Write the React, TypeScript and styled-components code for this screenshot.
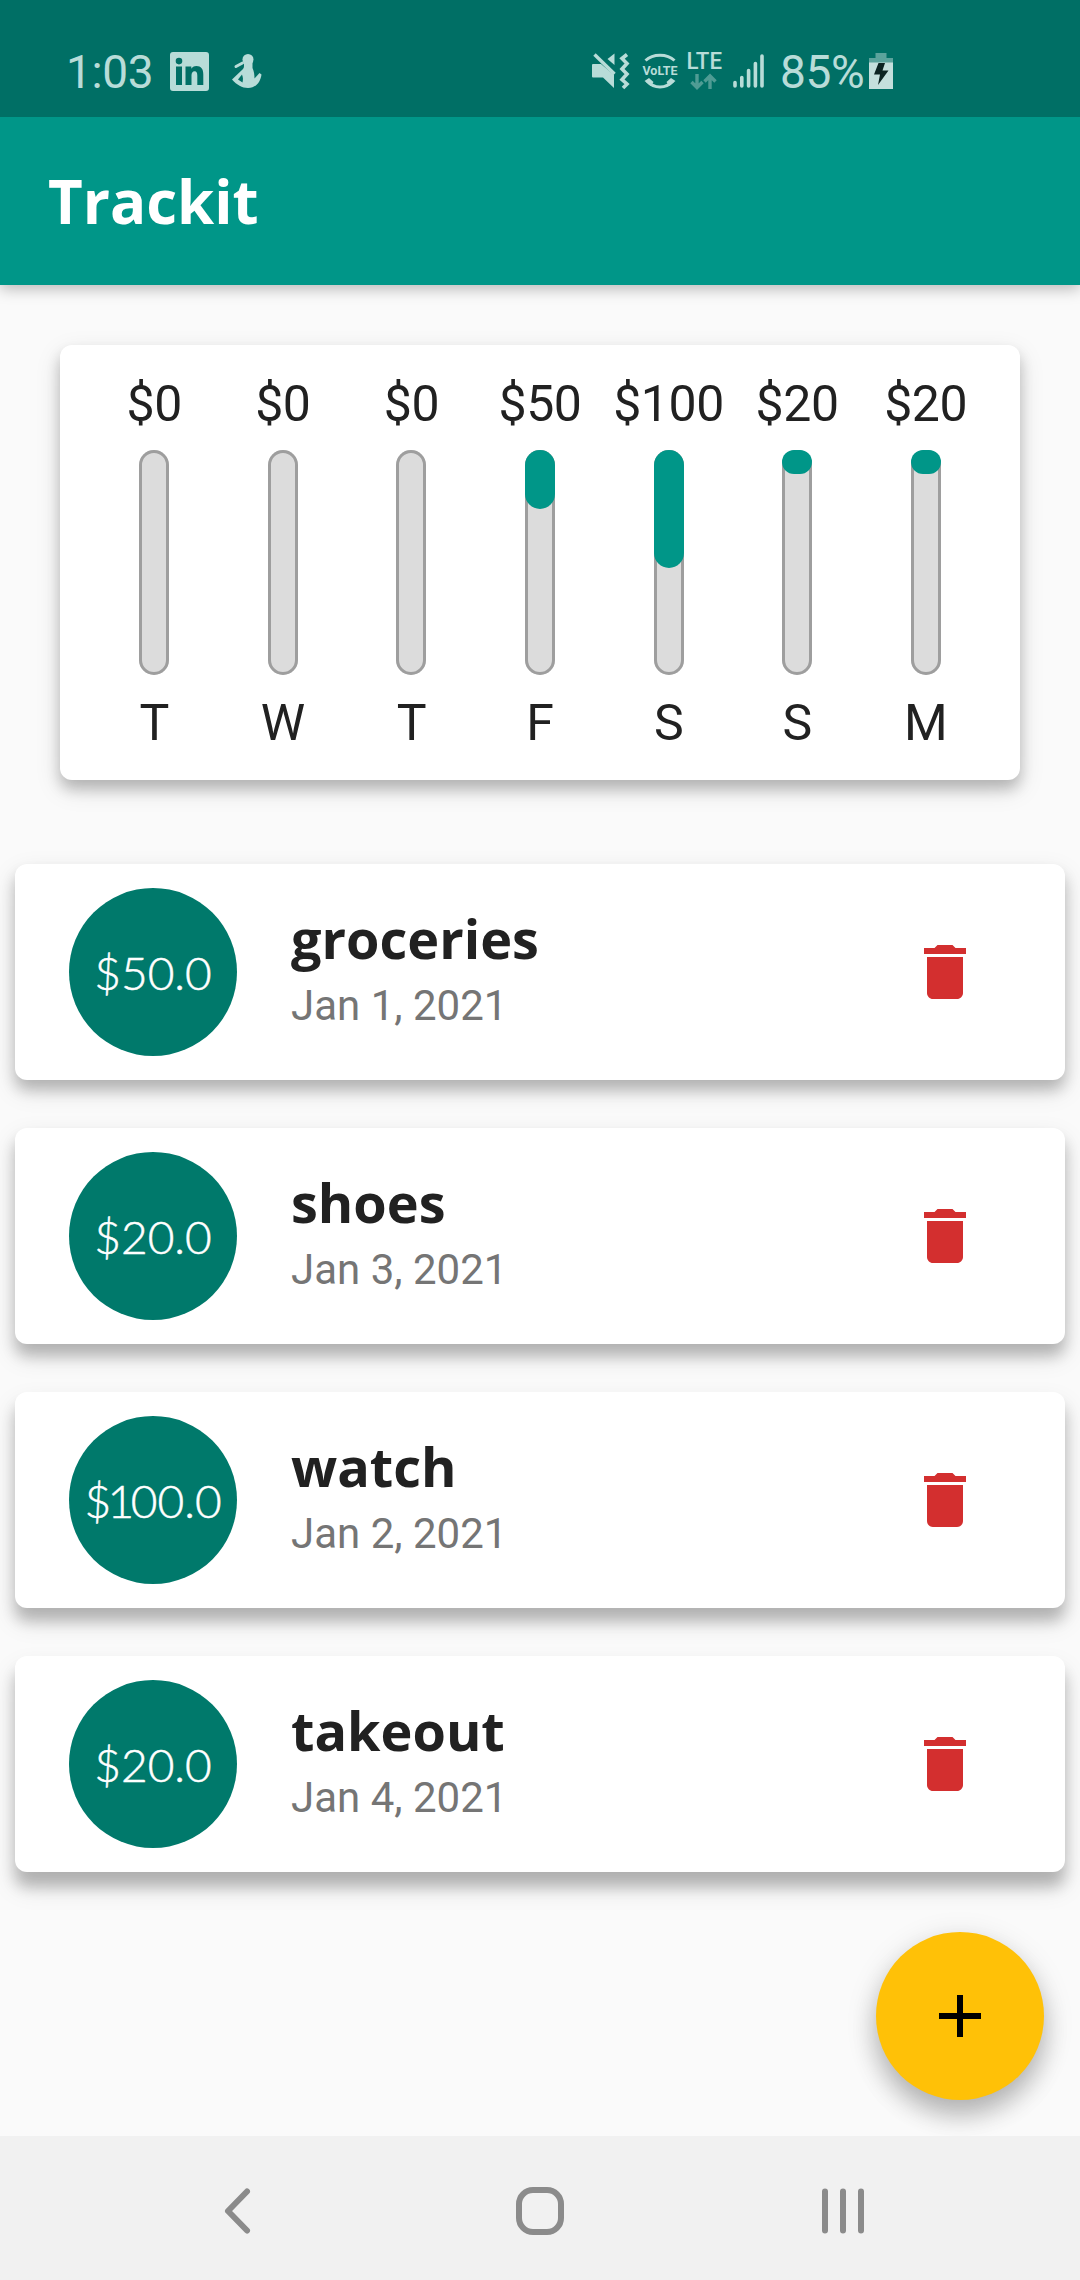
import React from 'react';
import styled, { createGlobalStyle } from 'styled-components';

const GlobalStyle = createGlobalStyle`
  * { box-sizing: border-box; }
  body { margin: 0; background: #fafafa; font-family: Roboto, "Noto Sans", sans-serif; }
`;

const tint = '#b8dcd8';

const Screen = styled.div`
  width: 1080px;
  height: 2280px;
  display: flex;
  flex-direction: column;
  background: #fafafa;
  overflow: hidden;
`;

const StatusBar = styled.header`
  height: 117px;
  flex: none;
  position: relative;
  z-index: 1;
  display: flex;
  justify-content: space-between;
  padding: 48px 187px 0 66px;
  background: #006f65;
  color: ${tint};
`;

const StatusGroup = styled.div`
  display: flex;
  height: 46px;
  align-items: center;
`;

const StatusText = styled.span<{ $width: number; $gap?: number }>`
  width: ${(p) => p.$width}px;
  margin-left: ${(p) => p.$gap ?? 0}px;
  padding-top: 2px;
  font-size: 46px;
  line-height: 46px;
  letter-spacing: -0.4px;
  white-space: nowrap;
`;

const StatusIcon = styled.svg<{ $gap?: number }>`
  display: block;
  flex: none;
  margin-left: ${(p) => p.$gap ?? 0}px;
  overflow: visible;
`;

const AppBar = styled.div`
  height: 168px;
  flex: none;
  display: flex;
  align-items: center;
  padding-left: 48px;
  background: #009688;
  box-shadow: 0 4px 14px rgba(0, 0, 0, 0.26);
`;

const AppTitle = styled.h1`
  margin: 0;
  color: #fff;
  font: 700 60px/82px "Open Sans", sans-serif;
`;

const Body = styled.main`
  flex: 1;
  min-height: 0;
  position: relative;
  padding: 60px 15px 0;
`;

const Card = styled.section<{ $drop?: number }>`
  background: #fff;
  border-radius: 12px;
  box-shadow:
    0 ${(p) => p.$drop ?? 9}px 14px rgba(0, 0, 0, 0.2),
    0 ${(p) => p.$drop ?? 9}px 26px rgba(0, 0, 0, 0.13);
`;

const ChartCard = styled(Card)`
  display: grid;
  grid-template-columns: repeat(7, 1fr);
  height: 435px;
  margin: 0 45px 84px;
  padding: 29px 30px 0;
`;

const DayColumn = styled.div`
  display: flex;
  flex-direction: column;
  align-items: center;
  color: #212121;
  font-size: 50px;
  line-height: 60px;
  letter-spacing: -0.4px;
`;

const Track = styled.div`
  width: 30px;
  height: 225px;
  margin: 16px 0 18px;
  border-radius: 15px;
  background: #dcdcdc;
  box-shadow: inset 0 0 0 3px #9e9e9e;
`;

const Fill = styled.div`
  border-radius: 15px;
  background: #009688;
`;

const ExpenseList = styled.ul`
  list-style: none;
  margin: 0;
  padding: 0;
  display: flex;
  flex-direction: column;
  gap: 48px;
`;

const ExpenseRow = styled(Card).attrs({ as: 'li' })`
  height: 216px;
  display: flex;
  align-items: center;
  padding: 0 84px 0 54px;
`;

const Amount = styled.div`
  width: 168px;
  height: 168px;
  flex: none;
  display: flex;
  align-items: center;
  justify-content: center;
  padding-top: 2px;
  border-radius: 50%;
  background: #00796b;
  color: #fff;
  font: 300 46px/56px Lato, sans-serif;
  -webkit-text-stroke: 0.5px #fff;
`;

const Leading = styled.span<{ $narrow: boolean }>`
  letter-spacing: ${(p) => (p.$narrow ? -3.5 : 0)}px;
`;

const Details = styled.div`
  flex: 1;
  padding-left: 54px;
`;

const ExpenseName = styled.h2`
  margin: 0 0 4px;
  color: #212121;
  font: 700 54px/72px "Open Sans", sans-serif;
`;

const ExpenseDate = styled.p`
  margin: 0 0 8px;
  color: #757575;
  font-size: 42px;
  line-height: 56px;
`;

const DeleteButton = styled.button`
  width: 72px;
  height: 72px;
  padding: 0;
  border: 0;
  background: none;
  color: #d32f2f;
`;

const AddButton = styled.button`
  position: absolute;
  right: 36px;
  bottom: 36px;
  width: 168px;
  height: 168px;
  display: flex;
  align-items: center;
  justify-content: center;
  padding: 0;
  border: 0;
  border-radius: 50%;
  background: #ffc107;
  color: #000;
  box-shadow: 0 16px 24px rgba(0, 0, 0, 0.2), 0 8px 32px rgba(0, 0, 0, 0.14);
`;

const NavBar = styled.nav`
  height: 144px;
  flex: none;
  position: relative;
  display: flex;
  justify-content: space-between;
  align-items: center;
  padding: 6px 213px 0;
  background: #f1f1f1;
`;

const week = [
  { day: 'T', spent: 0 },
  { day: 'W', spent: 0 },
  { day: 'T', spent: 0 },
  { day: 'F', spent: 50 },
  { day: 'S', spent: 100 },
  { day: 'S', spent: 20 },
  { day: 'M', spent: 20 },
];
const total = week.reduce((sum, d) => sum + d.spent, 0);

const expenses = [
  { name: 'groceries', date: 'Jan 1, 2021', amount: 50 },
  { name: 'shoes', date: 'Jan 3, 2021', amount: 20 },
  { name: 'watch', date: 'Jan 2, 2021', amount: 100 },
  { name: 'takeout', date: 'Jan 4, 2021', amount: 20 },
];

const LinkedInIcon = () => (
  <StatusIcon $gap={22} width="39" height="39" viewBox="0 0 39 39">
    <path
      fill={tint}
      fillRule="evenodd"
      d="M3 0H36a3 3 0 0 1 3 3V36a3 3 0 0 1-3 3H3a3 3 0 0 1-3-3V3A3 3 0 0 1 3 0ZM6 14.5V33h6V14.5ZM9 5.800a3.300 3.300 0 1 0 0 6.600a3.300 3.300 0 0 0 0-6.600ZM15.500 14.500V33h6V23.500c0-2.500 1-4.200 3.100-4.200s2.700 1.800 2.700 4.200V33h6V22.500c0-5.600-2.300-8.500-6.800-8.500-2.600 0-4.300 1.300-5.200 2.800V14.500Z"
    />
  </StatusIcon>
);

const FigureIcon = () => (
  <StatusIcon $gap={23} width="30" height="34" viewBox="0 0 30 34" fill="none" stroke={tint}>
    <circle cx="16" cy="5.500" r="5.500" fill={tint} stroke="none" />
    <path d="M10.500 9 4 12.500" strokeWidth="3" strokeLinecap="round" />
    <path fill={tint} stroke="none" d="M12 8h8.500v6c1.500 3 2 7 2 10.500L27.500 19l2 1.500c-1 7-5 13.500-13.500 13.500-6 0-11-3-16-8.500L10.500 15.500c1.500-1 1.500-3 1.500-4.500Z" />
    <path fill="#006f65" stroke="none" d="M10 20.500 6 25.500l4.500 3c.8-3 .5-5.500-.5-8Z" />
  </StatusIcon>
);

const MuteIcon = () => (
  <StatusIcon width="37" height="36" viewBox="0 0 37 36" fill={tint}>
    <path d="M0 12a1 1 0 0 1 1-1H9L22 22V35L11 24.500H1a1 1 0 0 1-1-1Z" />
    <path d="M2.500 1.500 22.500 21" stroke={tint} strokeWidth="3.400" />
    <path d="M22.500 .5V12L15.500 6Z" />
    <path d="M35 1.500 30 5.500l5 5-5 5.500 5 5-5 5.500 5 4.500-4 4" fill="none" stroke={tint} strokeWidth="3.600" />
  </StatusIcon>
);

const VolteIcon = () => (
  <StatusIcon $gap={13} width="36" height="36" viewBox="0 0 36 36" fill="none" stroke={tint}>
    <path d="M3.500 7.500C11 .5 25 .5 32.500 7.500" strokeWidth="3" />
    <path d="M5 28C12 36 24 36 31 28" strokeWidth="3" />
    <path d="M2.500 28 7 25l4.500 4L9 33ZM33.500 28 29 25 24.500 29l2.500 4Z" fill={tint} stroke="none" />
    <text x="18" y="22" textAnchor="middle" fontSize="13" fontWeight="700" fontFamily="Roboto, sans-serif" textLength="35" lengthAdjust="spacingAndGlyphs" fill={tint} stroke="none">VoLTE</text>
  </StatusIcon>
);

const LteIcon = () => (
  <StatusIcon $gap={9} width="35" height="38" viewBox="0 0 35 38">
    <text x="-.5" y="17" fontSize="23" fontWeight="500" fontFamily="Roboto, sans-serif" textLength="35.500" lengthAdjust="spacingAndGlyphs" fill={tint}>LTE</text>
    <path d="M10 22V35.500M4.500 30 10 35.500l5.500-5.500M23 37V24M17.500 29.500 23 24l5.500 5.500" fill="none" stroke="#4f9c94" strokeWidth="3.400" />
  </StatusIcon>
);

const SignalIcon = () => (
  <StatusIcon $gap={11} width="31" height="34" viewBox="0 0 31 34" stroke={tint} strokeWidth="3.600" strokeLinecap="round">
    <path d="M2 28.500V32M8.800 23.500V32M15.600 16.500V32M22.400 9.500V32M29 2V32" />
  </StatusIcon>
);

const BatteryIcon = () => (
  <StatusIcon $gap={5} width="24" height="36" viewBox="0 0 24 36">
    <path d="M6.500 0H17.500V5H24V10H0V5H6.500Z" fill="#5ba39c" />
    <path d="M0 9.500H24V36H0Z" fill="#c4dfdc" />
    <path d="M9.500 10H16L13.500 17.500H19.500L9 32 11 21.500H5Z" fill="#0c2422" />
  </StatusIcon>
);

export default function App() {
  return (
    <>
      <GlobalStyle />
      <Screen>
        <StatusBar>
          <StatusGroup>
            <StatusText $width={82}>1:03</StatusText>
            <LinkedInIcon />
            <FigureIcon />
          </StatusGroup>
          <StatusGroup>
            <MuteIcon />
            <VolteIcon />
            <LteIcon />
            <SignalIcon />
            <StatusText $width={84} $gap={16}>85%</StatusText>
            <BatteryIcon />
          </StatusGroup>
        </StatusBar>
        <AppBar>
          <AppTitle>Trackit</AppTitle>
        </AppBar>
        <Body>
          <ChartCard>
            {week.map((d, i) => (
              <DayColumn key={i}>
                <span>${d.spent}</span>
                <Track>
                  <Fill style={{ height: `${(d.spent / total) * 100}%` }} />
                </Track>
                <span>{d.day}</span>
              </DayColumn>
            ))}
          </ChartCard>
          <ExpenseList>
            {expenses.map((e, i) => {
              const label = `$${e.amount.toFixed(1)}`;
              return (
                <ExpenseRow key={e.name} $drop={10 + i * 1.5}>
                  <Amount>
                    <Leading $narrow={label[1] === '1'}>{label.slice(0, 2)}</Leading>
                    {label.slice(2)}
                  </Amount>
                  <Details>
                    <ExpenseName>{e.name}</ExpenseName>
                    <ExpenseDate>{e.date}</ExpenseDate>
                  </Details>
                  <DeleteButton aria-label="Delete">
                    <svg width="72" height="72" viewBox="0 0 24 24" fill="currentColor">
                      <path d="M6 19c0 1.100.9 2 2 2h8c1.100 0 2-.9 2-2V7H6v12zM19 4h-3.500l-1-1h-5l-1 1H5v2h14V4z" />
                    </svg>
                  </DeleteButton>
                </ExpenseRow>
              );
            })}
          </ExpenseList>
          <AddButton aria-label="Add">
            <svg width="72" height="72" viewBox="0 0 24 24" fill="currentColor">
              <path d="M19 13h-6v6h-2v-6H5v-2h6V5h2v6h6v2z" />
            </svg>
          </AddButton>
        </Body>
        <NavBar>
          <svg width="48" height="48" viewBox="0 0 48 48" fill="none" stroke="#8b8b8b" strokeWidth="6" strokeLinecap="round" strokeLinejoin="round">
            <path d="M34 4.500 15 24 34 43.500" />
          </svg>
          <svg width="48" height="48" viewBox="0 0 48 48" fill="none" stroke="#8b8b8b" strokeWidth="6">
            <rect x="3" y="3" width="42" height="42" rx="14" />
          </svg>
          <svg width="48" height="48" viewBox="0 0 48 48" fill="none" stroke="#8b8b8b" strokeWidth="6" strokeLinecap="round">
            <path d="M6 4.500V43.500M24 4.500V43.500M42 4.500V43.500" />
          </svg>
        </NavBar>
      </Screen>
    </>
  );
}
